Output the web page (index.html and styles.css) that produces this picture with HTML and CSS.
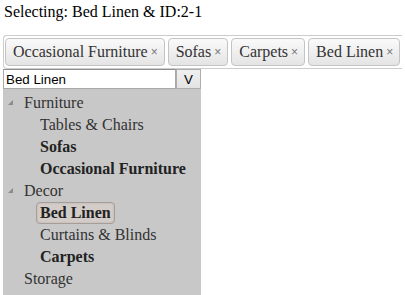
FILE: index.html
```html
<!DOCTYPE html>
<html lang="en">
<head>
  <meta charset="UTF-8" />
  <title>Category picker</title>
  <link rel="stylesheet" href="styles.css">
</head>
<body>
  <div class="status">Selecting: Bed Linen &amp; ID:2-1</div>

  <div class="tags">
    <span class="tag">Occasional Furniture <span class="x">×</span></span>
    <span class="tag">Sofas <span class="x">×</span></span>
    <span class="tag">Carpets <span class="x">×</span></span>
    <span class="tag">Bed Linen <span class="x">×</span></span>
  </div>

  <div class="picker">
    <div class="combo">
      <input type="text" value="Bed Linen" />
      <button>V</button>
    </div>
    <ul class="tree">
      <li class="node open"><span class="arrow"></span><span class="label">Furniture</span>
        <ul>
          <li><span class="label">Tables &amp; Chairs</span></li>
          <li><span class="label sel">Sofas</span></li>
          <li><span class="label sel">Occasional Furniture</span></li>
        </ul>
      </li>
      <li class="node open"><span class="arrow"></span><span class="label">Decor</span>
        <ul>
          <li><span class="label sel current">Bed Linen</span></li>
          <li><span class="label">Curtains &amp; Blinds</span></li>
          <li><span class="label sel">Carpets</span></li>
        </ul>
      </li>
      <li class="node"><span class="label">Storage</span></li>
    </ul>
  </div>
</body>
</html>
```

FILE: styles.css
```css
body {
  margin: 3px;
  font-family: 'Liberation Serif', serif;
  font-size: 16px;
  color: #000;
  background: #fff;
}
.status {
  padding-left: 1px;
  line-height: 18px;
}

/* tag bar: runs on past the right edge, so no right border */
.tags {
  margin-top: 14px;
  border: 1px solid #ccc;
  border-right: none;
  border-radius: 4px 0 0 4px;
  padding: 2px 0 2px 1px;
  display: flex;
  gap: 3px;
  white-space: nowrap;
  overflow: hidden;
}
.tag {
  display: inline-flex;
  align-items: center;
  flex-shrink: 0;
  height: 26px;
  padding: 0 6px 0 7px;
  border: 1px solid #c4c4c4;
  border-radius: 4px;
  background: linear-gradient(#fafafa, #e4e4e4);
  color: #333;
}
.tag .x {
  font-family: 'Liberation Sans', sans-serif;
  font-size: 12px;
  color: #777;
  margin-left: 3px;
}

/* dropdown */
.picker {
  width: 198px;
}
.combo {
  display: flex;
  height: 20px;
}
.combo input {
  box-sizing: border-box;
  width: 173px;
  height: 20px;
  margin: 0;
  padding: 0 2px;
  border: 1px solid #a9a9a9;
  border-top-color: #8f8f8f;
  font-family: 'Liberation Sans', sans-serif;
  font-size: 13.33px;
  color: #000;
}
.combo button {
  box-sizing: border-box;
  width: 25px;
  height: 20px;
  margin: 0;
  padding: 0;
  border: 1px solid #adadad;
  background: linear-gradient(#f0f0f0, #e3e3e3);
  font-family: 'Liberation Sans', sans-serif;
  font-size: 13.33px;
  color: #000;
}
.tree, .tree ul {
  list-style: none;
  margin: 0;
  padding: 0;
}
.tree {
  background: #c8c8c8;
  padding: 3px 0 8px;
  color: #333;
}
.tree li {
  line-height: 22px;
}
.tree > li {
  padding-left: 17px;
  position: relative;
}
.tree ul {
  padding-left: 16px;
}
.arrow {
  position: absolute;
  left: 5px;
  top: 8px;
  width: 0;
  height: 0;
  border-left: 5px solid transparent;
  border-bottom: 5px solid #8a8a8a;
}
.label {
  display: inline-block;
  padding: 0 3px;
  border: 1px solid transparent;
  border-radius: 4px;
  line-height: 20px;
}
.sel {
  font-weight: bold;
  color: #222;
}
.current {
  background: #d3ccc8;
  border-color: #a69d98;
  box-shadow: inset 0 0 2px rgba(0,0,0,0.15);
}
```
